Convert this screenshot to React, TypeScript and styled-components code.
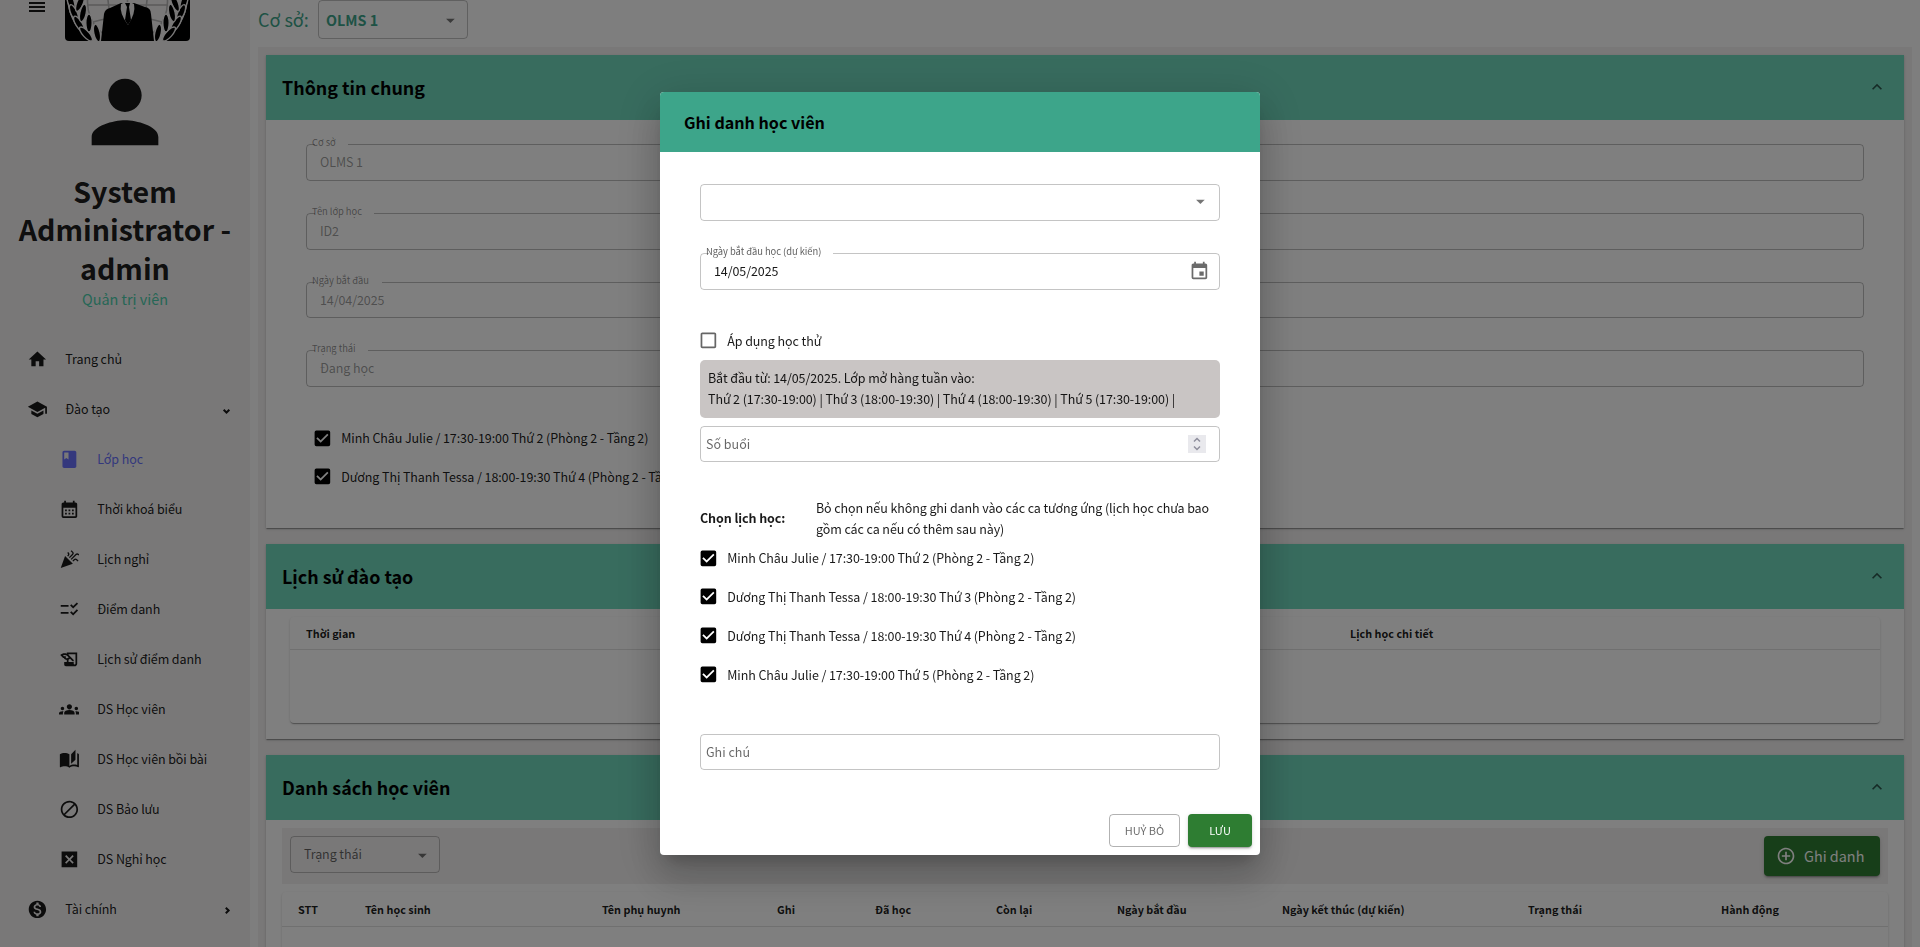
import React from "react";
import styled, { createGlobalStyle, css } from "styled-components";
import type { IconType } from "react-icons";
import {
  MdAddCircleOutline,
  MdArrowDropDown,
  MdAutoStories,
  MdCalendarMonth,
  MdCelebration,
  MdCheckBox,
  MdCheckBoxOutlineBlank,
  MdChecklistRtl,
  MdClass,
  MdEvent,
  MdExpandLess,
  MdGroups,
  MdHistoryEdu,
  MdHome,
  MdMonetizationOn,
  MdPerson,
  MdSchool,
  MdViewHeadline,
} from "react-icons/md";

const colors = {
  page: "#fcfcfc",
  panel: "#f2f0f0",
  header: "#70d8bd",
  accent: "#3da58a",
  accentLight: "#4cceac",
  active: "#6870fa",
  green: "#2e7d32",
  text: "rgba(0,0,0,0.9)",
  muted: "rgba(0,0,0,0.6)",
  disabled: "rgba(0,0,0,0.4)",
};

const GlobalStyle = createGlobalStyle`
  *, *::before, *::after { box-sizing: border-box; }
  html, body { margin: 0; padding: 0; }
  body {
    background: ${colors.page};
    color: ${colors.text};
    font-family: "Noto Sans CJK SC", "Noto Sans", sans-serif;
    font-size: 12.5px;
    letter-spacing: -0.09px;
    line-height: 21px;
    overflow: hidden;
  }
  svg { display: block; flex: none; }
`;

const Page = styled.div`
  display: flex;
  height: 947px;
  overflow: hidden;
`;

/* ---------- sidebar ---------- */

const Sidebar = styled.aside`
  width: 250px;
  flex: none;
  background: ${colors.panel};
  display: flex;
  flex-direction: column;
  overflow: hidden;
`;

const Brand = styled.div`
  height: 41px;
  flex: none;
  padding-left: 25px;
  display: flex;
  align-items: flex-start;
  gap: 16px;
`;

const MenuToggle = styled.div`
  width: 24px;
  margin-top: -7px;
`;

const Profile = styled.div`
  display: flex;
  flex-direction: column;
  align-items: center;
  text-align: center;
  padding-top: 21px;
  height: 293px;
  flex: none;
  letter-spacing: 0;
`;

const UserName = styled.h2`
  margin: 9.5px 10px 0;
  font-size: 28.6px;
  font-weight: 700;
  line-height: 38.7px;
`;

const UserRole = styled.div`
  font-size: 14.4px;
  line-height: 22px;
  color: ${colors.accentLight};
`;

const NavRow = styled.div<{ $sub?: boolean; $active?: boolean }>`
  height: 50px;
  flex: none;
  display: flex;
  align-items: center;
  gap: 18px;
  padding-left: ${(p) => (p.$sub ? 58.5 : 26.5)}px;
  padding-right: 20px;
  color: ${(p) => (p.$active ? colors.active : colors.text)};
  svg { font-size: 20.8px; }
`;

const NavLabel = styled.span`
  flex: 1;
  padding-bottom: 2px;
  white-space: nowrap;
`;

const Arrow = styled.i<{ $open?: boolean }>`
  width: 5px;
  height: 5px;
  border-right: 2px solid currentColor;
  border-bottom: 2px solid currentColor;
  transform: rotate(${(p) => (p.$open ? 45 : -45)}deg);
  margin: 3px 1px 0 0;
`;

/* ---------- main column ---------- */

const Main = styled.main`
  flex: 1;
  padding: 0 8px;
  display: flex;
  flex-direction: column;
`;

const TopBar = styled.div`
  height: 47px;
  flex: none;
  display: flex;
  align-items: flex-start;
  color: ${colors.accent};
  letter-spacing: 0;
`;

const TopLabel = styled.span`
  width: 60px;
  font-size: 18px;
  line-height: 38px;
`;

const Select = styled.div<{ $height: number; $bold?: boolean }>`
  width: 150px;
  height: ${(p) => p.$height}px;
  border: 1px solid rgba(0, 0, 0, 0.23);
  border-radius: 4px;
  display: flex;
  align-items: center;
  justify-content: space-between;
  padding: 0 6.5px 0 ${(p) => (p.$bold ? 7 : 13)}px;
  ${(p) =>
    p.$bold
      ? css`font-size: 14.3px; font-weight: 700;`
      : css`color: ${colors.muted}; span { padding-bottom: 2px; }`}
  svg { font-size: 20.8px; margin-top: 1px; color: rgba(0, 0, 0, 0.54); }
`;

const Content = styled.div`
  flex: 1;
  background: ${colors.panel};
  padding: 8px;
  display: flex;
  flex-direction: column;
  gap: 16px;
  min-height: 0;
`;

const Card = styled.section<{ $height: number }>`
  flex: none;
  height: ${(p) => p.$height}px;
  background: #fff;
  box-shadow: 0 2px 1px -1px rgba(0, 0, 0, 0.2), 0 1px 1px rgba(0, 0, 0, 0.14), 0 1px 3px rgba(0, 0, 0, 0.12);
`;

const CardHeader = styled.header`
  height: 65px;
  background: ${colors.header};
  padding: 0 17px 0 16px;
  display: flex;
  align-items: center;
  justify-content: space-between;
  svg { font-size: 20px; margin-bottom: 2px; color: rgba(0, 0, 0, 0.6); }
`;

const CardTitle = styled.h3`
  margin: 0;
  padding-bottom: 1px;
  font-size: 17.9px;
  font-weight: 700;
  letter-spacing: 0;
  color: #000;
  line-height: 28px;
`;

const InfoBody = styled.div`
  padding: 24px 40px 0;
  display: flex;
  flex-direction: column;
`;

const InfoFields = styled.div`
  display: flex;
  flex-direction: column;
  gap: 32px;
`;

/* ---------- form pieces ---------- */

const FieldBox = styled.div<{ $disabled?: boolean; $height?: number }>`
  position: relative;
  height: ${(p) => p.$height ?? 37}px;
  flex: none;
  display: flex;
  align-items: center;
  justify-content: space-between;
  padding: 0 10px 0 14px;
  color: ${(p) => (p.$disabled ? colors.disabled : colors.text)};
`;

const FieldValue = styled.span`
  padding-bottom: 2px;
`;

const Outline = styled.fieldset<{ $disabled?: boolean }>`
  position: absolute;
  inset: -5px 0 0;
  margin: 0;
  padding: 0 8px;
  min-width: 0;
  border: 1px solid ${(p) => (p.$disabled ? "rgba(0,0,0,0.26)" : "rgba(0,0,0,0.23)")};
  border-radius: 4px;
  pointer-events: none;
`;

const Notch = styled.legend<{ $width: number }>`
  padding: 0;
  height: 11px;
  width: ${(p) => p.$width}px;
`;

const FloatLabel = styled.label<{ $disabled?: boolean }>`
  position: absolute;
  left: 6px;
  top: -10px;
  font-size: 9.4px;
  letter-spacing: -0.04px;
  line-height: 16px;
  white-space: nowrap;
  color: ${(p) => (p.$disabled ? "rgba(0,0,0,0.45)" : "rgba(0,0,0,0.65)")};
`;

const Outlined = styled.div<{ $height: number }>`
  height: ${(p) => p.$height}px;
  flex: none;
  border: 1px solid rgba(0, 0, 0, 0.23);
  border-radius: 4px;
  display: flex;
  align-items: center;
  justify-content: space-between;
  padding: 0 12px 0 5px;
  color: ${colors.muted};
  letter-spacing: 0;
  span { padding-bottom: 1px; }
`;

const CheckRow = styled.div<{ $unchecked?: boolean }>`
  display: flex;
  align-items: center;
  gap: 9px;
  height: 38.7px;
  flex: none;
  svg { font-size: 20.8px; color: ${(p) => (p.$unchecked ? colors.muted : "#000")}; }
  span { padding-bottom: 1px; }
`;

const InfoChecks = styled.div`
  padding: 31.7px 0 0 5.5px;
`;

/* ---------- tables ---------- */

const TablePaper = styled.div<{ $margin: string; $height: number }>`
  margin: ${(p) => p.$margin};
  height: ${(p) => p.$height}px;
  background: #fff;
  border-radius: 4px;
  box-shadow: 0 2px 1px -1px rgba(0, 0, 0, 0.2), 0 1px 1px rgba(0, 0, 0, 0.14), 0 1px 3px rgba(0, 0, 0, 0.12);
`;

const TableHead = styled.div<{ $columns: string; $height: number }>`
  display: grid;
  grid-template-columns: ${(p) => p.$columns};
  height: ${(p) => p.$height}px;
  align-items: center;
  padding: 1px 0 0 16px;
  border-bottom: 1px solid rgba(224, 224, 224, 1);
  font-size: 10.8px;
  font-weight: 700;
  letter-spacing: 0;
  white-space: nowrap;
`;

const Toolbar = styled.div`
  margin: 8px 16px;
  height: 56px;
  padding: 8px;
  background: ${colors.panel};
  display: flex;
  align-items: flex-start;
  justify-content: space-between;
`;

const EnrolButton = styled.div`
  width: 116px;
  height: 40px;
  border-radius: 4px;
  background: ${colors.green};
  color: #fff;
  font-size: 14.4px;
  letter-spacing: 0;
  display: flex;
  align-items: center;
  padding-left: 12px;
  gap: 8px;
  white-space: nowrap;
  box-shadow: 0 3px 1px -2px rgba(0, 0, 0, 0.2), 0 2px 2px rgba(0, 0, 0, 0.14), 0 1px 5px rgba(0, 0, 0, 0.12);
  svg { font-size: 20px; }
  span { padding-bottom: 1px; }
`;

/* ---------- dialog ---------- */

const Backdrop = styled.div`
  position: fixed;
  inset: 0;
  background: rgba(0, 0, 0, 0.5);
  display: flex;
  align-items: center;
  justify-content: center;
`;

const Dialog = styled.div`
  width: 600px;
  height: 763px;
  background: #fff;
  border-radius: 4px;
  overflow: hidden;
  display: flex;
  flex-direction: column;
  box-shadow: 0 11px 15px -7px rgba(0, 0, 0, 0.2), 0 24px 38px 3px rgba(0, 0, 0, 0.14), 0 9px 46px 8px rgba(0, 0, 0, 0.12);
`;

const DialogTitle = styled.h2`
  margin: 0;
  height: 60px;
  flex: none;
  padding: 0 24px;
  background: ${colors.accent};
  color: #000;
  font-size: 16.1px;
  font-weight: 700;
  letter-spacing: 0;
  line-height: 61px;
`;

const DialogBody = styled.div`
  flex: 1;
  padding: 32px 40px 0;
  display: flex;
  flex-direction: column;
`;

const DateSlot = styled.div`
  padding-top: 32px;
  margin-bottom: 31.3px;
  svg { font-size: 20.8px; color: rgba(0, 0, 0, 0.58); }
`;

const PlainSelect = styled(Outlined)`
  padding-right: 8px;
  justify-content: flex-end;
  svg { font-size: 20.8px; margin-bottom: 3px; color: rgba(0, 0, 0, 0.54); }
`;

const DialogCheck = styled(CheckRow)`
  margin-left: -2.5px;
  span { padding-bottom: 0; }
`;

const Notice = styled.div`
  height: 58px;
  flex: none;
  margin-bottom: 8px;
  padding: 7px 8px;
  border-radius: 5px;
  background: #c9c5c4;
  white-space: nowrap;
`;

const Spinner = styled.div`
  width: 18px;
  height: 18px;
  margin-right: 1px;
  background: #e9e9ed;
  display: flex;
  align-items: center;
  justify-content: center;
`;

const ScheduleIntro = styled.div`
  display: flex;
  align-items: center;
  margin-top: 35px;
  height: 42px;
  flex: none;
`;

const ScheduleTitle = styled.strong`
  width: 116px;
  flex: none;
`;

const ScheduleList = styled.div`
  margin: -0.4px 0 40.6px;
`;

const Actions = styled.div`
  display: flex;
  justify-content: flex-end;
  gap: 8px;
  padding: 8px;
`;

const Button = styled.div<{ $primary?: boolean }>`
  height: 33px;
  width: ${(p) => (p.$primary ? 64 : 71)}px;
  border-radius: 4px;
  display: flex;
  align-items: center;
  justify-content: center;
  font-size: 11px;
  letter-spacing: 0;
  ${(p) =>
    p.$primary
      ? css`
          background: ${colors.green};
          color: #fff;
          box-shadow: 0 3px 1px -2px rgba(0, 0, 0, 0.2), 0 2px 2px rgba(0, 0, 0, 0.14), 0 1px 5px rgba(0, 0, 0, 0.12);
        `
      : css`
          border: 1px solid rgba(0, 0, 0, 0.3);
          color: ${colors.muted};
        `}
`;

/* ---------- drawings ---------- */

const leaves: [number, number, number][] = [
  [6, 2, -18], [9, 13, -24], [14, 24, -32], [21, 34, -42],
  [15, 3, 22], [18, 13, 12], [24, 23, 0], [32, 33, -12],
];

const Laurel = () => (
  <g fill="#000" stroke="#f2f0f0" strokeWidth="1.4">
    {leaves.map(([x, y, r]) => (
      <ellipse key={`${x}-${y}`} cx={x} cy={y} rx="3.2" ry="9" transform={`rotate(${r} ${x} ${y})`} />
    ))}
  </g>
);

const Emblem = () => (
  <svg width="125" height="41" viewBox="0 0 125 41">
    <defs>
      <clipPath id="emblem">
        <path d="M0 0H125V37a4 4 0 0 1-4 4H4a4 4 0 0 1-4-4Z" />
      </clipPath>
    </defs>
    <g clipPath="url(#emblem)">
      <rect width="125" height="41" fill="#f2f0f0" />
      <path d="M0 0H2Q5 28 28 41H0ZM125 0H123Q120 28 97 41H125Z" fill="#000" />
      <g fill="none" stroke="#b5b4b4" strokeWidth="1.6">
        <circle cx="62.5" cy="2" r="40" />
        <path d="M22 5H103M43 0Q44 12 47 18M82 0Q81 12 78 18M28 22Q62 12 97 22M62.5 0V8" />
      </g>
      <Laurel />
      <g transform="translate(125 0) scale(-1 1)">
        <Laurel />
      </g>
      <path d="M36 41L39 14Q40 9 45 8L56 3H69L80 7Q86 8 86 14L89 41Z" fill="#000" />
      <path d="M56 4L60 2H65L69 4Q71 13 63 25Q54 13 56 4Z" fill="#f2f0f0" />
      <path d="M60 3H65L64 7L66 20L63 25L60 20L62 7Z" fill="#000" />
    </g>
  </svg>
);

const DisabledSquare = () => (
  <svg width="1em" height="1em" viewBox="0 0 24 24" fill="currentColor">
    <path d="M3 3v18h18V3H3zm14 12.59L15.59 17 12 13.41 8.41 17 7 15.59 10.59 12 7 8.41 8.41 7 12 10.59 15.59 7 17 8.41 13.41 12 17 15.59z" />
  </svg>
);

const SlashedCircle = () => (
  <svg width="1em" height="1em" viewBox="0 0 24 24" fill="currentColor">
    <path d="M12 2C6.5 2 2 6.5 2 12s4.5 10 10 10 10-4.5 10-10S17.5 2 12 2zM4 12c0-4.4 3.6-8 8-8 1.8 0 3.5.6 4.9 1.7L5.7 16.9C4.6 15.5 4 13.8 4 12zm8 8c-1.8 0-3.5-.6-4.9-1.7L18.3 7.1C19.4 8.5 20 10.2 20 12c0 4.4-3.6 8-8 8z" />
  </svg>
);

const SpinArrows = () => (
  <svg width="10" height="16" viewBox="0 0 10 16" fill="none" stroke="#8f8f9d" strokeWidth="1.5">
    <path d="M2 5.5L5 2.5L8 5.5M2 10.5L5 13.5L8 10.5" />
  </svg>
);

/* ---------- composition ---------- */

interface NavItem {
  label: string;
  icon: IconType | React.FC;
  sub?: boolean;
  active?: boolean;
  arrow?: "open" | "closed";
}

const navItems: NavItem[] = [
  { label: "Trang chủ", icon: MdHome },
  { label: "Đào tạo", icon: MdSchool, arrow: "open" },
  { label: "Lớp học", icon: MdClass, sub: true, active: true },
  { label: "Thời khoá biểu", icon: MdCalendarMonth, sub: true },
  { label: "Lịch nghỉ", icon: MdCelebration, sub: true },
  { label: "Điểm danh", icon: MdChecklistRtl, sub: true },
  { label: "Lịch sử điểm danh", icon: MdHistoryEdu, sub: true },
  { label: "DS Học viên", icon: MdGroups, sub: true },
  { label: "DS Học viên bồi bài", icon: MdAutoStories, sub: true },
  { label: "DS Bảo lưu", icon: SlashedCircle, sub: true },
  { label: "DS Nghỉ học", icon: DisabledSquare, sub: true },
  { label: "Tài chính", icon: MdMonetizationOn, arrow: "closed" },
];

const infoFields = [
  { label: "Cơ sở", value: "OLMS 1", notch: 33, height: 37 },
  { label: "Tên lớp học", value: "ID2", notch: 59, height: 37 },
  { label: "Ngày bắt đầu", value: "14/04/2025", notch: 67, height: 36 },
  { label: "Trạng thái", value: "Đang học", notch: 53, height: 37 },
];

const infoSchedule = [
  "Minh Châu Julie / 17:30-19:00 Thứ 2 (Phòng 2 - Tầng 2)",
  "Dương Thị Thanh Tessa / 18:00-19:30 Thứ 4 (Phòng 2 - Tầng 2)",
];

const schedule = [
  "Minh Châu Julie / 17:30-19:00 Thứ 2 (Phòng 2 - Tầng 2)",
  "Dương Thị Thanh Tessa / 18:00-19:30 Thứ 3 (Phòng 2 - Tầng 2)",
  "Dương Thị Thanh Tessa / 18:00-19:30 Thứ 4 (Phòng 2 - Tầng 2)",
  "Minh Châu Julie / 17:30-19:00 Thứ 5 (Phòng 2 - Tầng 2)",
];

const studentColumns = [
  "STT", "Tên học sinh", "Tên phụ huynh", "Ghi", "Đã học", "Còn lại",
  "Ngày bắt đầu", "Ngày kết thúc (dự kiến)", "Trạng thái", "Hành động",
];

interface FieldProps {
  label: string;
  value: string;
  notch: number;
  height?: number;
  disabled?: boolean;
  children?: React.ReactNode;
}

const Field = ({ label, value, notch, height, disabled, children }: FieldProps) => (
  <FieldBox $disabled={disabled} $height={height}>
    <FieldValue>{value}</FieldValue>
    {children}
    <Outline $disabled={disabled}>
      <Notch $width={notch} />
    </Outline>
    <FloatLabel $disabled={disabled}>{label}</FloatLabel>
  </FieldBox>
);

const SectionHeader = ({ title }: { title: string }) => (
  <CardHeader>
    <CardTitle>{title}</CardTitle>
    <MdExpandLess />
  </CardHeader>
);

const EnrolDialog = () => (
  <Dialog>
    <DialogTitle>Ghi danh học viên</DialogTitle>
    <DialogBody>
      <PlainSelect $height={37}>
        <MdArrowDropDown />
      </PlainSelect>
      <DateSlot>
        <Field label="Ngày bắt đầu học (dự kiến)" value="14/05/2025" notch={124}>
          <MdEvent />
        </Field>
      </DateSlot>
      <DialogCheck $unchecked>
        <MdCheckBoxOutlineBlank />
        <span>Áp dụng học thử</span>
      </DialogCheck>
      <Notice>
        Bắt đầu từ: 14/05/2025. Lớp mở hàng tuần vào:
        <br />
        Thứ 2 (17:30-19:00) | Thứ 3 (18:00-19:30) | Thứ 4 (18:00-19:30) | Thứ 5 (17:30-19:00) |
      </Notice>
      <Outlined $height={36}>
        <span>Số buổi</span>
        <Spinner>
          <SpinArrows />
        </Spinner>
      </Outlined>
      <ScheduleIntro>
        <ScheduleTitle>Chọn lịch học:</ScheduleTitle>
        <span>Bỏ chọn nếu không ghi danh vào các ca tương ứng (lịch học chưa bao gồm các ca nếu có thêm sau này)</span>
      </ScheduleIntro>
      <ScheduleList>
        {schedule.map((item) => (
          <DialogCheck key={item}>
            <MdCheckBox />
            <span>{item}</span>
          </DialogCheck>
        ))}
      </ScheduleList>
      <Outlined $height={36}>
        <span>Ghi chú</span>
      </Outlined>
    </DialogBody>
    <Actions>
      <Button>HUỶ BỎ</Button>
      <Button $primary>LƯU</Button>
    </Actions>
  </Dialog>
);

export default function App() {
  return (
    <>
      <GlobalStyle />
      <Page>
        <Sidebar>
          <Brand>
            <MenuToggle>
              <MdViewHeadline size={24} />
            </MenuToggle>
            <Emblem />
          </Brand>
          <Profile>
            <MdPerson size={100} />
            <UserName>System Administrator - admin</UserName>
            <UserRole>Quản trị viên</UserRole>
          </Profile>
          {navItems.map(({ label, icon: Icon, sub, active, arrow }) => (
            <NavRow key={label} $sub={sub} $active={active}>
              <Icon />
              <NavLabel>{label}</NavLabel>
              {arrow && <Arrow $open={arrow === "open"} />}
            </NavRow>
          ))}
        </Sidebar>
        <Main>
          <TopBar>
            <TopLabel>Cơ sở:</TopLabel>
            <Select $height={39} $bold>
              <span>OLMS 1</span>
              <MdArrowDropDown />
            </Select>
          </TopBar>
          <Content>
            <Card $height={473}>
              <SectionHeader title="Thông tin chung" />
              <InfoBody>
                <InfoFields>
                  {infoFields.map((field) => (
                    <Field key={field.label} {...field} disabled />
                  ))}
                </InfoFields>
                <InfoChecks>
                  {infoSchedule.map((item) => (
                    <CheckRow key={item}>
                      <MdCheckBox />
                      <span>{item}</span>
                    </CheckRow>
                  ))}
                </InfoChecks>
              </InfoBody>
            </Card>
            <Card $height={195}>
              <SectionHeader title="Lịch sử đào tạo" />
              <TablePaper $margin="8px 24px 0" $height={106}>
                <TableHead $columns="1044px 1fr" $height={33}>
                  <span>Thời gian</span>
                  <span>Lịch học chi tiết</span>
                </TableHead>
              </TablePaper>
            </Card>
            <Card $height={400}>
              <SectionHeader title="Danh sách học viên" />
              <Toolbar>
                <Select $height={37}>
                  <span>Trạng thái</span>
                  <MdArrowDropDown />
                </Select>
                <EnrolButton>
                  <MdAddCircleOutline />
                  <span>Ghi danh</span>
                </EnrolButton>
              </Toolbar>
              <TablePaper $margin="0 16px" $height={240}>
                <TableHead $columns="67px 237px 175px 98px 121px 121px 165px 246px 193px 1fr" $height={35}>
                  {studentColumns.map((column) => (
                    <span key={column}>{column}</span>
                  ))}
                </TableHead>
              </TablePaper>
            </Card>
          </Content>
        </Main>
      </Page>
      <Backdrop>
        <EnrolDialog />
      </Backdrop>
    </>
  );
}
